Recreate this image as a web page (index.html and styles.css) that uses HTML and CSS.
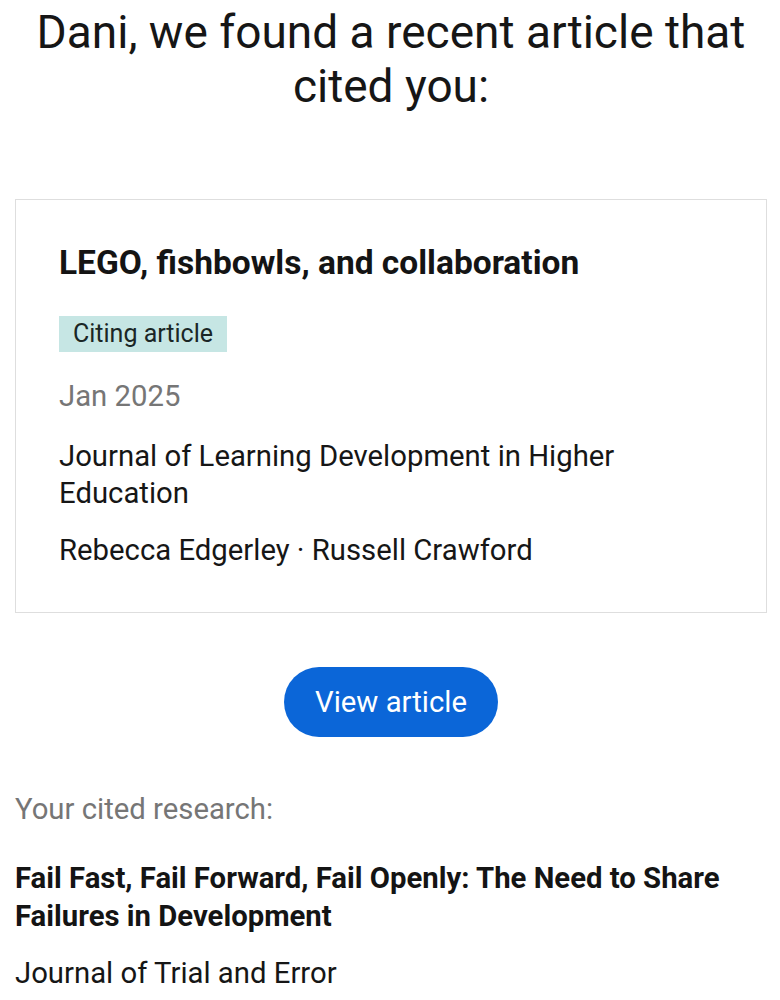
FILE: index.html
```html
<!DOCTYPE html>
<html>
<head>
<meta charset="utf-8">
<link rel="stylesheet" href="styles.css">
</head>
<body>
<div class="page">
  <h1 class="headline">Dani, we found a recent article that cited you:</h1>
  <div class="card">
    <div class="card-title">LEGO, fishbowls, and collaboration</div>
    <div class="tag-row"><span class="tag">Citing article</span></div>
    <div class="date">Jan 2025</div>
    <div class="journal">Journal of Learning Development in Higher Education</div>
    <div class="authors">Rebecca Edgerley · Russell Crawford</div>
  </div>
  <div class="btn-row"><a class="btn">View article</a></div>
  <div class="label">Your cited research:</div>
  <div class="research-title">Fail Fast, Fail Forward, Fail Openly: The Need to Share Failures in Development</div>
  <div class="research-journal">Journal of Trial and Error</div>
</div>
</body>
</html>
```
FILE: styles.css
```css
html, body {
  margin: 0;
  padding: 0;
  background: #fff;
}
body {
  font-family: Roboto, "Liberation Sans", Arial, sans-serif;
  color: #161616;
}
.page {
  padding: 5px 13px 0 15px;
}
.headline {
  margin: 0;
  font-weight: 400;
  font-size: 46px;
  line-height: 54px;
  text-align: center;
  color: #161616;
}
.card {
  margin-top: 86px;
  border: 1px solid #dedede;
  padding: 43px 43px 43px 43px;
}
.card-title {
  font-weight: 700;
  font-size: 33.5px;
  line-height: 40px;
  color: #141414;
}
.tag-row {
  margin-top: 33px;
  display: flex;
}
.tag {
  background: #c6e6e4;
  color: #1a2626;
  font-size: 25px;
  line-height: 36px;
  height: 36px;
  padding: 0 14px;
}
.date {
  margin-top: 26px;
  font-size: 29.3px;
  line-height: 37px;
  color: #767676;
}
.journal {
  margin-top: 23px;
  font-size: 29.3px;
  line-height: 37px;
  color: #161616;
}
.authors {
  margin-top: 20px;
  font-size: 29.3px;
  line-height: 37px;
  color: #161616;
}
.btn-row {
  display: flex;
  justify-content: center;
  margin-top: 54px;
}
.btn {
  display: block;
  background: #0b66d8;
  color: #fff;
  font-size: 29.3px;
  line-height: 70px;
  height: 70px;
  padding: 0 31px;
  border-radius: 35px;
}
.label {
  margin-top: 54px;
  font-size: 29.3px;
  line-height: 37px;
  color: #767676;
}
.research-title {
  margin-top: 31px;
  font-weight: 700;
  font-size: 29.3px;
  line-height: 38px;
  color: #141414;
}
.research-journal {
  margin-top: 20px;
  font-size: 29.3px;
  line-height: 37px;
  color: #161616;
}
```
